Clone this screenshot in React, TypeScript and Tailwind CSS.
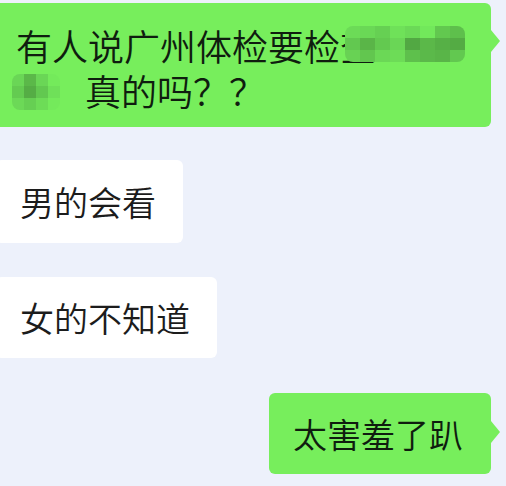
const GREEN = "bg-[#77ee5c]";

// mosaic colours for the blurred bits in the first message
const mosaicTop = [
  ["#6cdb57", "#6ad856", "#66d053", "#6fe159", "#6bd957", "#72e85b", "#62c84f", "#5ebf4c"],
  ["#62c850", "#5ab548", "#63c950", "#6ad656", "#52a843", "#5bb849", "#56b046", "#54ab44"],
  ["#68d254", "#62c64f", "#6bd856", "#6ddc57", "#5ec04c", "#5bb94a", "#59b548", "#62c850"],
];

const mosaicBottom = [
  ["#6ad656", "#5bb849", "#6ad656", "#74ea5b"],
  ["#64cb51", "#55ad45", "#62c850", "#6fe059"],
  ["#6cd957", "#66cf53", "#6ddc57", "#74ea5b"],
];

function Mosaic({ rows, cell, h }: { rows: string[][]; cell: number; h: number }) {
  return (
    <div className="flex flex-col overflow-hidden rounded-[8px] blur-[0.6px]">
      {rows.map((row, i) => (
        <div key={i} className="flex">
          {row.map((c, j) => (
            <div key={j} style={{ background: c, width: cell, height: h }} />
          ))}
        </div>
      ))}
    </div>
  );
}

function Tail({ top }: { top: string }) {
  return (
    <div
      className={`absolute left-full ${top} w-0 h-0 border-y-[11px] border-y-transparent border-l-[9px] border-l-[#77ee5c]`}
    />
  );
}

export default function App() {
  return (
    <div
      className="w-[506px] h-[486px] overflow-hidden bg-[#edf1fb] flex flex-col pt-[3px] font-[350]"
      style={{ fontFamily: '"Noto Sans CJK SC", "Noto Sans", sans-serif' }}
    >
      {/* outgoing, long */}
      <div className={`relative -ml-2 w-[499px] h-[124px] rounded-[6px] ${GREEN} pl-6 pt-[20px] text-[36px] leading-[45px] text-[#0f1d0f]`}>
        <div className="flex items-center h-[45px]">
          <span className="whitespace-nowrap leading-[45px]">有人说广州体检要检查</span>
          <div className="-ml-[31px] mt-[-4px]">
            <Mosaic rows={mosaicTop} cell={15} h={12} />
          </div>
        </div>
        <div className="flex items-center h-[45px]">
          <div className="-ml-[4px] mt-[2px]">
            <Mosaic rows={mosaicBottom} cell={12} h={12} />
          </div>
          <span className="ml-[25px] whitespace-nowrap leading-[45px]">真的吗？？</span>
        </div>
        <Tail top="top-[27px]" />
      </div>

      {/* incoming */}
      <div className="mt-[33px] -ml-1 self-start h-[83px] flex items-center rounded-[6px] bg-white pl-6 pr-[27px] text-[34px] text-[#1c1c1c]">
        男的会看
      </div>
      <div className="mt-[34px] -ml-1 self-start h-[81px] flex items-center rounded-[6px] bg-white pl-6 pr-[27px] text-[34px] text-[#1c1c1c]">
        女的不知道
      </div>

      {/* outgoing, short */}
      <div className="mt-[35px] self-end mr-[15px] relative">
        <div className={`h-[81px] w-[222px] flex items-center rounded-[6px] ${GREEN} pl-6 text-[34px] text-[#0f1d0f]`}>
          太害羞了趴
        </div>
        <Tail top="top-[28px]" />
      </div>
    </div>
  );
}
